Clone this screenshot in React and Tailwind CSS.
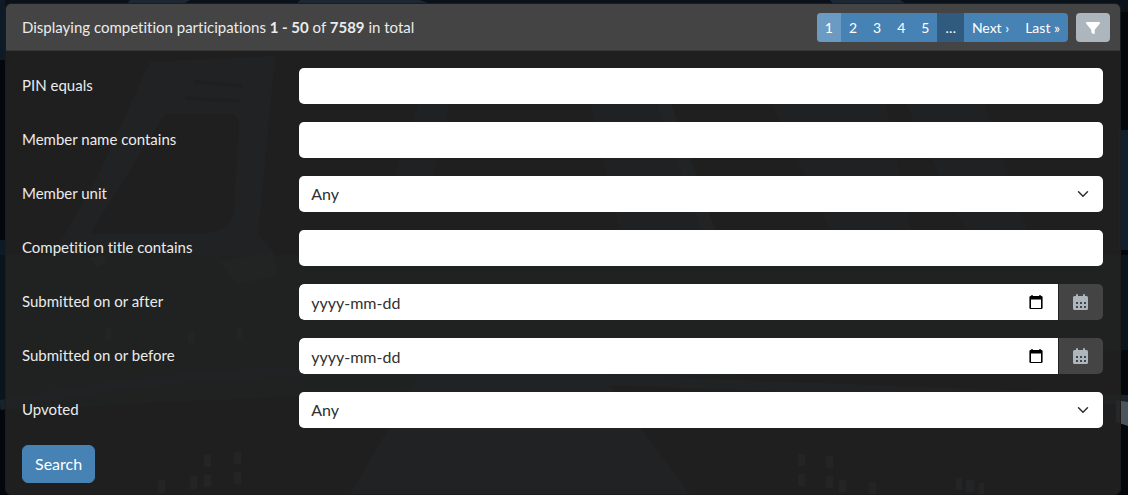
import { FaFilter } from "react-icons/fa6";

const control =
  "block h-9 w-full rounded-[5px] bg-white px-3 text-[16px] leading-6 text-[#303030] placeholder:text-[#303030] placeholder:opacity-100 outline-none";

function Backdrop() {
  return (
    <svg
      className="absolute inset-0 -z-10 h-full w-full"
      viewBox="0 0 1128 495"
      preserveAspectRatio="none"
      aria-hidden="true"
    >
      <rect width="1128" height="495" fill="#04070c" />
      <path d="M0 0H1128V12H0Z" fill="#0a1119" />
      <path d="M130 0h60l-20 12h-50zM300 0h120l30 12H290zM830 0h70l20 12h-80z" fill="#1c2733" />
      <path d="M0 0h5v60H0zM0 240h6v160H0z" fill="#0e1a26" />
      <path d="M150 62L275 56 258 235 280 260H50L96 180z" fill="#13202c" />
      <path d="M165 114h65q10 0 9 14l-5 82q-2 24-40 24H90z" fill="#020406" />
      <path d="M195 80l48 4v4l-48-4zM185 96l55 3v4l-55-3z" fill="#020406" />
      <path d="M420 100h30l-20 90h-40zM590 100h80l35 130h-85zM770 100h115l25 130h-80zM900 90h80l50 150h-60z" fill="#101c28" />
      <path d="M656 100l14 0 45 130h-14z" fill="#1b2934" />
      <path d="M1119 130h9v120h-9zM1119 300h9v40h-9z" fill="#11202f" />
      <path d="M0 255h1128v95L640 380 0 410z" fill="#0a141d" />
      <path d="M220 262l52-12 6 26-42 8z" fill="#1f2930" />
      <path d="M90 258l13-3 3 8-10 3zM106 328h5v12h-5zM188 333h6v10h-6zM237 328h5v10h-5z" fill="#313b42" />
      <path d="M0 405Q200 365 400 372T1128 400" fill="none" stroke="#17222b" strokeWidth="10" />
      <path d="M420 374h180l90 121H350z" fill="#172533" />
      <path d="M1116 400l12 2v24l-12-4z" fill="#4b535d" />
      <g fill="#2b363c">
        <path d="M158 480h7v13h-7zM190 476h7v13h-7zM204 455h7v12h-7zM204 475h7v12h-7zM234 452h7v12h-7zM234 472h7v12h-7z" />
        <path d="M798 454h7v12h-7zM798 474h7v12h-7zM826 456h7v12h-7zM826 476h7v12h-7zM839 480h7v12h-7zM869 482h7v12h-7zM956 478h6v12h-6zM966 480h8v12h-8zM979 483h5v12h-5z" />
      </g>
    </svg>
  );
}

function Row({ id, label, children }) {
  return (
    <div className="grid grid-cols-4 items-start gap-x-7">
      <label htmlFor={id} className="pt-[5px] leading-6">
        {label}
      </label>
      <div className="col-span-3">{children}</div>
    </div>
  );
}

function TextField({ id, label }) {
  return (
    <Row id={id} label={label}>
      <input id={id} type="text" className={control} />
    </Row>
  );
}

function SelectField({ id, label }) {
  return (
    <Row id={id} label={label}>
      <div className="relative">
        <select id={id} className={control + " appearance-none"}>
          <option>Any</option>
        </select>
        <svg
          className="pointer-events-none absolute inset-y-0 right-[14px] my-auto h-3 w-3"
          viewBox="0 0 16 16"
          fill="none"
          stroke="#303030"
          strokeWidth="2"
          strokeLinecap="round"
          strokeLinejoin="round"
          aria-hidden="true"
        >
          <path d="m2 5 6 6 6-6" />
        </svg>
      </div>
    </Row>
  );
}

function DateField({ id, label }) {
  return (
    <Row id={id} label={label}>
      <div className="flex h-9 overflow-hidden rounded-[5px]">
        <div className="relative min-w-0 flex-1">
          <input id={id} type="text" placeholder="yyyy-mm-dd" className={control + " rounded-r-none"} />
          <svg
            className="pointer-events-none absolute inset-y-0 right-[14px] my-auto h-4 w-4"
            viewBox="0 0 16 16"
            aria-hidden="true"
          >
            <path
              fillRule="evenodd"
              d="M3.300 1h1.400v1h6.600V1h1.400v1h.6q1.300 0 1.300 1.300v10.400q0 1.300-1.300 1.300H2.700q-1.300 0-1.300-1.300V3.300Q1.400 2 2.700 2h.6zM3 5.500V14h10V5.500z"
            />
          </svg>
        </div>
        <button
          type="button"
          aria-label={"Pick date: " + label}
          className="flex w-[45px] items-center justify-center border-l border-[#222] bg-[#444] text-[#adb5bd]"
        >
          <svg className="h-4 w-4" viewBox="0 0 16 16" fill="currentColor" aria-hidden="true">
            <path
              fillRule="evenodd"
              d="M3 1q0-1 1-1t1 1v1h5V1q0-1 1-1t1 1v1h1.500q1.500 0 1.500 1.500v11q0 1.500-1.500 1.500h-12Q0 16 0 14.500v-11Q0 2 1.500 2H3zM3 8v2h2V8zm4 0v2h2V8zm4 0v2h2V8zM3 12v2h2v-2zm4 0v2h2v-2zm4 0v2h2v-2z"
            />
          </svg>
        </button>
      </div>
    </Row>
  );
}

export default function App() {
  return (
    <div className="relative isolate min-h-screen pt-[3px] pr-[7px] pl-[5px] font-['Lato',sans-serif] text-[15px] text-[#ebebeb] [font-variant-ligatures:none]">
      <Backdrop />
      <main className="overflow-hidden rounded-md border border-[#1c1c1c] bg-[#222222]/90">
        <header className="flex items-center justify-between border-b border-[#383838] bg-[#444] pt-[9px] pr-[10px] pb-2 pl-4">
          <p>
            Displaying competition participations <b>1 - 50</b> of <b>7589</b> in total
          </p>
          <div className="flex gap-2">
            <nav
              aria-label="Pages"
              className="flex overflow-hidden rounded-[4px] bg-[#4682b4] text-[14px] leading-[29px] text-white *:px-2"
            >
              <a href="#1" aria-current="page" className="bg-[#6b9bc3]">1</a>
              <a href="#2">2</a>
              <a href="#3">3</a>
              <a href="#4">4</a>
              <a href="#5">5</a>
              <span className="bg-[#315b7e]">…</span>
              <a href="#next">Next ›</a>
              <a href="#last">Last »</a>
            </nav>
            <button
              type="button"
              aria-label="Filter"
              className="flex h-[29px] w-[34px] items-center justify-center rounded-[4px] bg-[#adb5bd] text-white"
            >
              <FaFilter size={14} />
            </button>
          </div>
        </header>
        <form className="pt-[17px] pr-[17px] pb-[11px] pl-4" onSubmit={(e) => e.preventDefault()}>
          <div className="flex flex-col gap-[18px]">
            <TextField id="pin" label="PIN equals" />
            <TextField id="name" label="Member name contains" />
            <SelectField id="unit" label="Member unit" />
            <TextField id="title" label="Competition title contains" />
            <DateField id="after" label="Submitted on or after" />
            <DateField id="before" label="Submitted on or before" />
            <SelectField id="upvoted" label="Upvoted" />
          </div>
          <button
            type="submit"
            className="mt-[17px] block h-[38px] rounded-md border border-[#4682b4] bg-[#4682b4] px-3 text-[16px] text-white"
          >
            Search
          </button>
        </form>
      </main>
    </div>
  );
}
